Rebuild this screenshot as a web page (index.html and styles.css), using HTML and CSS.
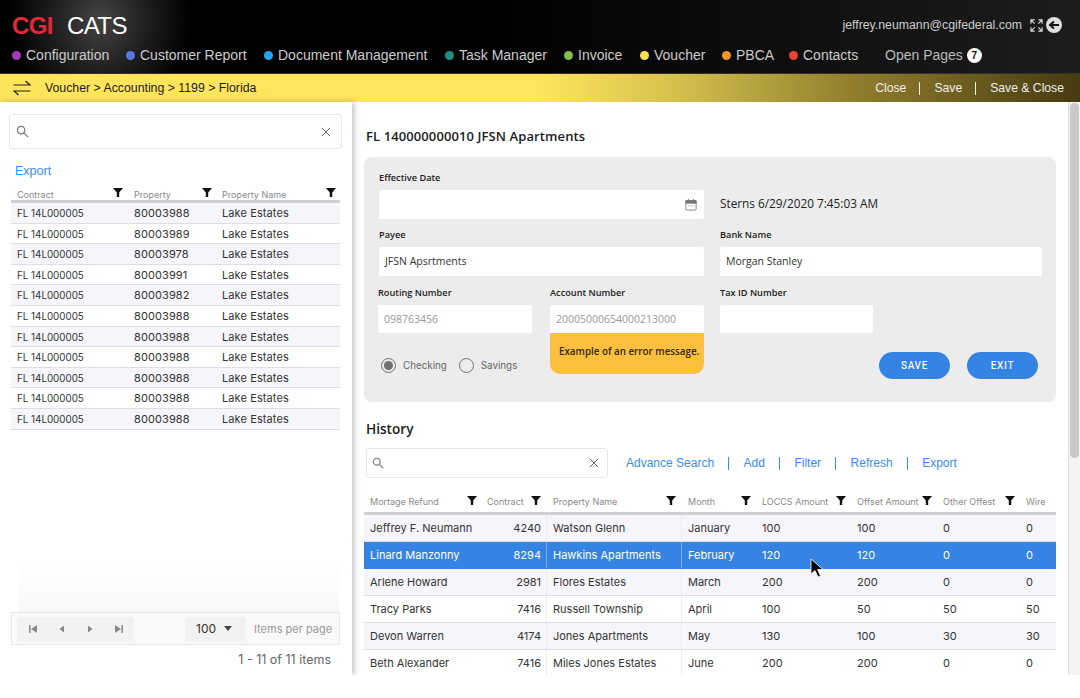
FILE: index.html
```html
<!DOCTYPE html>
<html lang="en">
<head>
<meta charset="utf-8">
<title>CGI CATS</title>
<link rel="stylesheet" href="styles.css">
</head>
<body>
<div class="app">
  <header class="top">
    <div class="top-row">
      <div class="logo"><span class="cgi">CGI</span><span class="cats">CATS</span></div>
      <div class="user">
        <span>jeffrey.neumann@cgifederal.com</span>
        <svg class="expand" viewBox="0 0 14 14" width="13" height="13" fill="none" stroke="#ddd" stroke-width="1.2"><path d="M1 5V1h4M1 1l4 4M9 1h4v4M13 1L9 5M1 9v4h4M1 13l4-4M13 9v4H9M13 13L9 9"/></svg>
        <svg class="logout" viewBox="0 0 16 16" width="16" height="16"><circle cx="8" cy="8" r="8" fill="#ddd"/><path d="M13 8H5M8 4.500L4 8l4 3.500" fill="none" stroke="#111" stroke-width="2"/></svg>
      </div>
    </div>
    <nav class="nav">
      <a class="nav-item nav-w1"><i class="dot d-purple"></i>Configuration</a>
      <a class="nav-item nav-w2"><i class="dot d-indigo"></i>Customer Report</a>
      <a class="nav-item nav-w3"><i class="dot d-sky"></i>Document Management</a>
      <a class="nav-item nav-w4"><i class="dot d-teal"></i>Task Manager</a>
      <a class="nav-item nav-w5"><i class="dot d-green"></i>Invoice</a>
      <a class="nav-item nav-w6"><i class="dot d-yellow"></i>Voucher</a>
      <a class="nav-item nav-w7"><i class="dot d-orange"></i>PBCA</a>
      <a class="nav-item nav-w8"><i class="dot d-red"></i>Contacts</a>
      <a class="open-pages">Open Pages<b class="badge">7</b></a>
    </nav>
  </header>

  <div class="crumbbar">
    <svg class="swap" viewBox="0 0 18 16" width="18" height="16" fill="none" stroke="#222" stroke-width="1.200"><path d="M0.500 5H17L12.500 1M17.500 11H1L5.500 15"/></svg>
    <div class="crumbs">Voucher &gt; Accounting &gt; 1199 &gt; Florida</div>
    <div class="actions"><a>Close</a><s></s><a>Save</a><s></s><a>Save &amp; Close</a></div>
  </div>

  <div class="body">
    <aside class="side">
      <div class="search search-side">
        <svg viewBox="0 0 14 14" width="13" height="13" fill="none" stroke="#777" stroke-width="1.300"><circle cx="5.500" cy="5.500" r="4"/><path d="M8.500 8.500L13 13"/></svg>
        <svg viewBox="0 0 12 12" width="10" height="10" fill="none" stroke="#666" stroke-width="1.200"><path d="M1 1l10 10M11 1L1 11"/></svg>
      </div>
      <a class="export">Export</a>
      <div class="stable">
        <div class="shead"><span>Contract<i class="flt"></i></span><span>Property<i class="flt"></i></span><span>Property Name<i class="flt"></i></span></div>
        <div class="srow"><span>FL 14L000005</span><span>80003988</span><span>Lake Estates</span></div>
        <div class="srow"><span>FL 14L000005</span><span>80003989</span><span>Lake Estates</span></div>
        <div class="srow"><span>FL 14L000005</span><span>80003978</span><span>Lake Estates</span></div>
        <div class="srow"><span>FL 14L000005</span><span>80003991</span><span>Lake Estates</span></div>
        <div class="srow"><span>FL 14L000005</span><span>80003982</span><span>Lake Estates</span></div>
        <div class="srow"><span>FL 14L000005</span><span>80003988</span><span>Lake Estates</span></div>
        <div class="srow"><span>FL 14L000005</span><span>80003988</span><span>Lake Estates</span></div>
        <div class="srow"><span>FL 14L000005</span><span>80003988</span><span>Lake Estates</span></div>
        <div class="srow"><span>FL 14L000005</span><span>80003988</span><span>Lake Estates</span></div>
        <div class="srow"><span>FL 14L000005</span><span>80003988</span><span>Lake Estates</span></div>
        <div class="srow"><span>FL 14L000005</span><span>80003988</span><span>Lake Estates</span></div>
      </div>
      <div class="fade"></div>
      <div class="pager">
        <div class="pbtns">
          <svg viewBox="0 0 10 10" width="10" height="10" fill="#888"><path d="M1 1h1.500v8H1zM9 1v8L3 5z"/></svg>
          <svg viewBox="0 0 10 10" width="10" height="10" fill="#888"><path d="M7 1.500v7L2.500 5z"/></svg>
          <svg viewBox="0 0 10 10" width="10" height="10" fill="#888"><path d="M3 1.500v7L7.500 5z"/></svg>
          <svg viewBox="0 0 10 10" width="10" height="10" fill="#888"><path d="M9 1H7.500v8H9zM1 1v8l6-4z"/></svg>
        </div>
        <div class="psize">100<i class="caret"></i></div>
        <span class="plabel">Items per page</span>
      </div>
      <div class="pcount">1 - 11 of 11 items</div>
    </aside>

    <main class="main">
      <h1 class="title">FL 140000000010 JFSN Apartments</h1>
      <section class="form">
        <div class="frow">
          <label class="field wide"><span>Effective Date</span>
            <div class="input input-date">
              <svg viewBox="0 0 14 14" width="12" height="13" fill="none" stroke="#777"><rect x="1" y="2.500" width="12" height="11" rx="1"/><path d="M1 2.500h12v3H1z" fill="#777"/><path d="M4 .5v2M10 .5v2M4 8.500h1M6.500 8.500h1M9 8.500h1"/></svg>
            </div>
          </label>
          <div class="stamp">Sterns 6/29/2020 7:45:03 AM</div>
        </div>
        <div class="frow">
          <label class="field wide"><span>Payee</span><div class="input">JFSN Apsrtments</div></label>
          <label class="field bank"><span>Bank Name</span><div class="input">Morgan Stanley</div></label>
        </div>
        <div class="frow frow-3">
          <div class="left-col">
            <label class="field routing"><span>Routing Number</span><div class="input input-ph">098763456</div></label>
            <div class="radios">
              <span class="radio on"></span><em>Checking</em>
              <span class="radio"></span><em>Savings</em>
            </div>
          </div>
          <div class="acct">
            <label class="field"><span>Account Number</span><div class="input input-ph">20005000654000213000</div></label>
            <div class="error">Example of an error message.</div>
          </div>
          <div class="right-col">
            <label class="field tax"><span>Tax ID Number</span><div class="input"></div></label>
            <div class="btns"><a class="btn">SAVE</a><a class="btn">EXIT</a></div>
          </div>
        </div>
      </section>

      <h2 class="history">History</h2>
      <div class="tools">
        <div class="search search-hist">
          <svg viewBox="0 0 14 14" width="12" height="12" fill="none" stroke="#777" stroke-width="1.300"><circle cx="5.500" cy="5.500" r="4"/><path d="M8.500 8.500L13 13"/></svg>
          <svg viewBox="0 0 12 12" width="10" height="10" fill="none" stroke="#666" stroke-width="1.200"><path d="M1 1l10 10M11 1L1 11"/></svg>
        </div>
        <div class="links"><a>Advance Search</a><s></s><a>Add</a><s></s><a>Filter</a><s></s><a>Refresh</a><s></s><a>Export</a></div>
      </div>
      <div class="htable">
        <div class="hhead"><span>Mortage Refund<i class="flt"></i></span><span>Contract<i class="flt"></i></span><span>Property Name<i class="flt"></i></span><span>Month<i class="flt"></i></span><span>LOCCS Amount<i class="flt"></i></span><span>Offset Amount<i class="flt"></i></span><span>Other Offest<i class="flt"></i></span><span>Wire</span></div>
        <div class="hrow"><span>Jeffrey F. Neumann</span><span class="num">4240</span><span>Watson Glenn</span><span>January</span><span>100</span><span>100</span><span>0</span><span>0</span></div>
        <div class="hrow sel"><span>Linard Manzonny</span><span class="num">8294</span><span>Hawkins Apartments</span><span>February</span><span>120</span><span>120</span><span>0</span><span>0</span></div>
        <div class="hrow"><span>Arlene Howard</span><span class="num">2981</span><span>Flores Estates</span><span>March</span><span>200</span><span>200</span><span>0</span><span>0</span></div>
        <div class="hrow"><span>Tracy Parks</span><span class="num">7416</span><span>Russell Township</span><span>April</span><span>100</span><span>50</span><span>50</span><span>50</span></div>
        <div class="hrow"><span>Devon Warren</span><span class="num">4174</span><span>Jones Apartments</span><span>May</span><span>130</span><span>100</span><span>30</span><span>30</span></div>
        <div class="hrow"><span>Beth Alexander</span><span class="num">7416</span><span>Miles Jones Estates</span><span>June</span><span>200</span><span>200</span><span>0</span><span>0</span></div>
      </div>
    </main>
    <div class="scroll"><div class="thumb"></div></div>
    <svg class="cursor" viewBox="0 0 14 20" width="14" height="20"><path d="M1 1v15l4-3.500 3 6.500 2.500-1-3-6.500H13z" fill="#000" stroke="#fff" stroke-width=".8"/></svg>
  </div>
</div>
</body>
</html>
```
FILE: styles.css
```css
* { box-sizing: border-box; }
html, body { margin: 0; padding: 0; background: #fff; }
body { width: 1080px; height: 698px; overflow: hidden; font-family: "Liberation Sans", Arial, sans-serif; }
.app { height: 675px; display: flex; flex-direction: column; overflow: hidden; }

/* header */
.top {
  height: 74px; flex: none; color: #ccc;
  background:
    radial-gradient(ellipse 90px 100px at 100px 20px, #454343 0%, rgba(60,58,58,.55) 50%, rgba(0,0,0,0) 100%),
    linear-gradient(90deg, #000 0%, #000 45%, #1d1d1d 100%);
  border-bottom: 1px solid #33312a;
}
.top-row { height: 43px; display: flex; align-items: flex-end; justify-content: space-between; padding: 0 18px 3px 12px; }
.logo { display: flex; align-items: baseline; font-size: 24px; line-height: 28px; letter-spacing: -.6px; }
.cgi { color: #e2283a; font-weight: 700; width: 55px; }
.cats { color: #fff; }
.user { display: flex; align-items: center; font-size: 12.3px; color: #ccc; height: 18px; margin-bottom: 6px; }
.expand { margin-left: 8px; }
.logout { margin-left: 3px; }
.nav { display: flex; align-items: center; height: 22px; padding: 2px 0 0 12px; font-size: 14px; }
.nav-item { display: flex; align-items: center; color: #ccc; white-space: nowrap; }
.nav-w1 { width: 114px; } .nav-w2 { width: 138px; } .nav-w3 { width: 181px; } .nav-w4 { width: 119px; }
.nav-w5 { width: 76px; } .nav-w6 { width: 82px; } .nav-w7 { width: 67px; } .nav-w8 { width: 96px; }
.dot { width: 9px; height: 9px; border-radius: 50%; margin-right: 5px; flex: none; }
.d-purple { background: #a23bb8; } .d-indigo { background: #5878e0; } .d-sky { background: #22a7ee; }
.d-teal { background: #1f9180; } .d-green { background: #84bd4a; } .d-yellow { background: #f7e14d; }
.d-orange { background: #f5922a; } .d-red { background: #e8433a; }
.open-pages { display: flex; align-items: center; color: #bbb; white-space: nowrap; }
.badge { width: 15px; height: 15px; border-radius: 50%; background: #fff; color: #111; font-size: 10px; line-height: 15px; text-align: center; margin-left: 4px; }

/* breadcrumb */
.crumbbar {
  height: 28px; flex: none; display: flex; align-items: center; padding: 0 16px 0 13px;
  background: linear-gradient(90deg, #ffe55c 0%, #ffe55c 50%, #d8c24e 62%, #94822f 78%, #463a10 100%);
}
.crumbs { margin-left: 14px; font-size: 12.3px; color: #222; flex: 1; }
.actions { display: flex; align-items: center; font-size: 12.2px; color: #eee; }
.actions s { width: 1px; height: 13px; background: #eee; margin: 0 14px 0 13px; }

/* layout */
.body { flex: 1; display: flex; position: relative; min-height: 0; }
.side { width: 352px; flex: none; padding: 12px 10px 0 9px; box-shadow: 2px 0 6px rgba(0,0,0,.25); position: relative; z-index: 1; background: #fff; display: flex; flex-direction: column; }
.main { flex: 1; padding: 0 12px 0 14px; background: #fff; min-width: 0; overflow: hidden; }
.scroll { width: 12px; flex: none; background: #f4f4f4; border-left: 1px solid #ddd; padding: 1px 1px 0 1px; }
.thumb { height: 355px; background: #c9c9c9; border-radius: 5px; }
.cursor { position: absolute; left: 810px; top: 456px; z-index: 3; }

/* search */
.search { display: flex; align-items: center; justify-content: space-between; background: #fff; border: 1px solid #e6e6e6; border-radius: 3px; }
.search-side { height: 35px; width: 333px; padding: 0 10px 0 6px; flex: none; }
.search-hist { height: 30px; width: 242px; padding: 0 8px 0 5px; flex: none; }

.export { color: #3a8bee; font-size: 12.5px; line-height: 16px; margin: 14px 0 0 6px; }

/* side table */
.stable { margin: 9px 0 0 2px; width: 329px; font-family: Inter, "Noto Sans", sans-serif; color: #333; }
.shead, .srow { display: grid; grid-template-columns: 116px 89px 124px; }
.shead { height: 15px; border-bottom: 3px solid #cfcfd6; font-size: 9px; color: #8a8a8a; }
.shead span { position: relative; padding-left: 6px; line-height: 13px; }
.shead span + span { padding-left: 7px; }
.shead span:last-child { padding-left: 6px; }
.flt { position: absolute; top: 0; right: 4px; width: 10px; height: 9px; background: #111; clip-path: polygon(0 0, 100% 0, 62% 50%, 62% 100%, 38% 100%, 38% 50%); }
.srow { height: 20.6px; line-height: 21px; font-size: 9.8px; border-bottom: 1px solid #dedee6; }
.srow:nth-child(even) { background: #f5f5fa; }
.srow span { padding-left: 6px; white-space: nowrap; }
.srow span + span { padding-left: 7px; font-size: 11px; letter-spacing: .1px; line-height: 20px; }
.srow span:last-child { padding-left: 6px; }
.fade { flex: 1; margin: 0 3px 0 10px; background: linear-gradient(180deg, #fff 70%, #f8f8fb 100%); }

/* pager */
.pager { flex: none; margin-left: 2px; width: 329px; height: 33px; background: #f9f9f9; border: 1px solid #e8e8e8; display: flex; align-items: center; padding: 0 8px 0 5px; font-family: Inter, "Noto Sans", sans-serif; }
.pbtns { width: 117px; height: 24px; background: #f2f2f2; border-radius: 4px; display: flex; align-items: center; justify-content: space-between; padding: 0 10px 0 11px; flex: none; }
.psize { width: 61px; height: 24px; margin-left: 51px; background: #f2f2f2; border-radius: 4px; display: flex; align-items: center; font-size: 12px; color: #333; padding-left: 11px; flex: none; }
.caret { width: 0; height: 0; border: 4.500px solid transparent; border-top: 5px solid #444; border-bottom: 0; margin-left: 8px; }
.plabel { margin-left: 8px; font-size: 11px; color: #999; white-space: nowrap; }
.pcount { flex: none; height: 30px; line-height: 30px; padding-right: 11px; text-align: right; font-family: Inter, "Noto Sans", sans-serif; font-size: 12.5px; color: #666; }

/* form */
.title { margin: 0; height: 55px; padding: 25px 0 0 0; font: 600 13px/18px "Open Sans", sans-serif; letter-spacing: .1px; color: #1c1c1c; }
.form { width: 692px; margin-left: -2px; height: 245px; background: #ececec; border-radius: 8px; padding: 15px 14px 0 15px; font-family: "Open Sans", sans-serif; }
.frow { display: flex; gap: 16px; margin-bottom: 10px; }
.frow + .frow { margin-bottom: 11px; }
.field { display: block; }
.field > span { display: block; font-size: 9.2px; font-weight: 600; line-height: 12px; color: #222; margin-bottom: 6px; }
.wide { width: 325px; }
.bank { width: 322px; }
.input { height: 29px; background: #fff; border-radius: 2px; font-size: 10.500px; line-height: 29px; padding-left: 6px; color: #333; }
.input-date { display: flex; align-items: center; justify-content: flex-end; padding-right: 7px; }
.input-ph { color: #999; }
.stamp { font-size: 11.8px; color: #222; padding-top: 17px; line-height: 29px; }
.frow-3 { gap: 18px; margin: 0 0 0 -1px; position: relative; }
.left-col { width: 154px; }
.routing .input, .acct .input, .tax .input { height: 28px; line-height: 28px; }
.acct { width: 154px; }
.acct .input { border-radius: 2px 2px 0 0; }
.error { height: 41px; background: #fdbf3e; border-radius: 0 0 10px 10px; font-size: 9.8px; font-weight: 600; line-height: 37px; padding-left: 9px; color: #33290a; white-space: nowrap; }
.right-col { width: 318px; margin-left: -2px; }
.tax { width: 153px; margin-left: 0; }
.radios { display: flex; align-items: center; margin-top: 23px; padding-left: 3px; font-family: Inter, "Noto Sans", sans-serif; font-size: 9.8px; color: #666; height: 18px; }
.radios em { font-style: normal; margin-left: 7px; margin-right: 12px; white-space: nowrap; }
.radio { width: 15px; height: 15px; border-radius: 50%; border: 1.500px solid #707070; position: relative; flex: none; }
.radio.on::after { content: ""; position: absolute; inset: 2px; border-radius: 50%; background: #707070; }
.btns { display: flex; gap: 17px; margin: 19px 0 0 159px; }
.btn { width: 71px; height: 27px; border-radius: 14px; background: #3584e4; color: #f4f4f4; font: 500 10px/27px Roboto, sans-serif; letter-spacing: .7px; text-align: center; flex: none; }

/* history */
.history { margin: 0; height: 46px; padding-top: 17px; font: 600 13.6px/19px "Open Sans", sans-serif; color: #1c1c1c; }
.tools { display: flex; align-items: center; height: 30px; }
.links { display: flex; align-items: center; margin-left: 18px; font-size: 12px; color: #3a8bee; }
.links s { width: 1px; height: 13px; background: #3a8bee; margin: 0 14.5px 0 14px; }

/* history table */
.htable { margin: 11px 0 0 -2px; width: 692px; font-family: Inter, "Noto Sans", sans-serif; color: #333; }
.hhead, .hrow { display: grid; grid-template-columns: 118px 64px 135px 75px 95px 86px 83px 36px; }
.hhead { height: 26px; border-bottom: 3px solid #cfcfd6; font-size: 9px; color: #8a8a8a; }
.hhead span { position: relative; padding: 6px 0 0 6px; line-height: 13px; white-space: nowrap; }
.hhead span:nth-child(2) { padding-left: 5px; }
.hhead span:nth-child(3), .hhead span:nth-child(4) { padding-left: 7px; }
.hhead .flt { top: 7px; right: 5px; }
.hrow { height: 27px; line-height: 26px; font-size: 11px; border-bottom: 1px solid #dedee6; }
.hrow:nth-child(even) { background: #f5f5fa; }
.hrow span { padding-left: 6px; white-space: nowrap; }
.hrow span:nth-child(3), .hrow span:nth-child(4) { border-left: 1px solid #ececf2; }
.hrow .num { padding: 0 5px 0 0; text-align: right; }
.hrow.sel { background: #3584e4; color: #fff; border-bottom-color: #3584e4; }
.hrow.sel span:nth-child(3), .hrow.sel span:nth-child(4) { border-left-color: #7fb0ee; }
```
